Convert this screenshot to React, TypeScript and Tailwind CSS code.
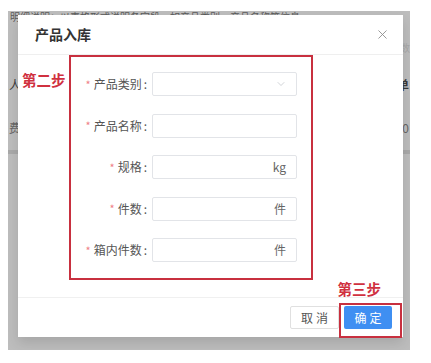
import { ChevronDown, X } from "lucide-react";

const fields = [
    { label: "产品类别", kind: "select" },
    { label: "产品名称", kind: "text" },
    { label: "规格", kind: "suffix", suffix: "kg" },
    { label: "件数", kind: "suffix", suffix: "件" },
    { label: "箱内件数", kind: "suffix", suffix: "件" },
];

function Field({ label, kind, suffix }: { label: string; kind: string; suffix?: string }) {
    return (
        <div className="flex items-center h-[24px]">
            <div className="w-[76px] shrink-0 flex justify-end items-center text-[12px] text-[#555]">
                <span className="text-[#ef7f86] mr-[3px] text-[11px]">*</span>
                <span>{label}</span>
                <span className="ml-[2px]">:</span>
            </div>
            <div className="ml-[5px] w-[145px] h-[24px] border border-[#e2e4e8] rounded-[2px] bg-white flex items-center justify-end pr-[10px] text-[12px] text-[#666]">
                {kind === "select" && <ChevronDown size={12} strokeWidth={1.3} className="text-[#b8bcc2] -mr-[1px]" />}
                {kind === "suffix" && <span>{suffix}</span>}
            </div>
        </div>
    );
}

export default function App() {
    return (
        <div className="w-[431px] h-[363px] bg-white pt-[11px] pl-[8px] font-['Noto_Sans_CJK_SC','Noto_Sans',sans-serif]">
            <div className="relative w-[402px] h-[339px] bg-[#bdbdbd] overflow-hidden">
                {/* page behind the overlay */}
                <div className="text-[10px] leading-[11px] pl-[2px] text-[#5a5a5a] whitespace-nowrap">
                    明细说明：以表格形式说明各字段，如产品类别、产品名称等信息
                </div>
                <div className="flex justify-end mt-[18px] leading-[16px] text-[10px] text-[#a8a8a8]">数</div>
                <div className="flex justify-between mt-[21px] leading-[16px] px-[1px] text-[12px] text-[#3a3a3a]">
                    <span>人</span>
                    <span className="font-bold">单</span>
                </div>
                <div className="flex justify-between mt-[27px] leading-[16px] px-[1px] text-[12px] text-[#666]">
                    <span>费</span>
                    <span>0</span>
                </div>
                <div className="mt-[14px] h-[4px] bg-[#a9a9a9]" />

                {/* dialog */}
                <div className="absolute left-[10px] top-[4px] w-[385px] h-[322px] bg-white flex flex-col shadow-[0_6px_12px_rgba(0,0,0,0.12)]">
                    <div className="h-[40px] flex items-center justify-between pl-[17px] pr-[13px] border-b border-[#efefef]">
                        <span className="text-[14px] font-semibold text-[#333]">产品入库</span>
                        <X size={15} strokeWidth={1.4} className="text-[#8c8c8c]" />
                    </div>
                    <div className="flex-1 flex items-start pl-[4px]">
                        <div className="mt-[15px] w-[44px] whitespace-nowrap text-[14.5px] font-semibold text-[#d0313f] leading-[20px]">第二步</div>
                        <div className="ml-[3px] w-[244px] h-[225px] border-2 border-[#c8303f] flex flex-col gap-[17.5px] pt-[15px]">
                            {fields.map((f) => (
                                <Field key={f.label} {...f} />
                            ))}
                        </div>
                    </div>
                    <div className="relative h-[40px] border-t border-[#f0f0f0] flex items-center justify-end gap-[5px] pr-[11px]">
                        <button className="w-[49px] h-[23px] border border-[#e0e0e0] rounded-[2px] text-[12px] text-[#555] tracking-[3px] pl-[3px]">取消</button>
                        <button className="w-[48px] h-[23px] bg-[#3f8ff2] rounded-[2px] text-[12px] text-white tracking-[3px] pl-[3px]">确定</button>
                        <div className="absolute right-[1px] top-[5px] w-[63px] h-[35px] border-2 border-[#c8303f]" />
                        <div className="absolute right-[22px] -top-[19px] whitespace-nowrap text-[14.5px] font-semibold text-[#d0313f] leading-[20px]">第三步</div>
                    </div>
                </div>
            </div>
        </div>
    );
}
